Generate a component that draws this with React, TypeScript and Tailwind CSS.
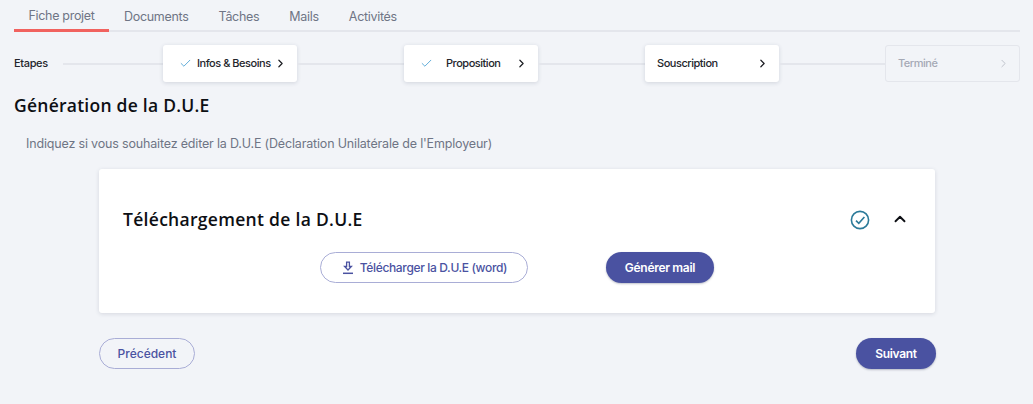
import { ChevronRight, ChevronUp, Check } from "lucide-react";

const body = "font-['Inter',sans-serif]";
const heading = "font-['Open_Sans',sans-serif]";

const tabs = ["Documents", "Tâches", "Mails", "Activités"];

const Line = ({ w }: { w: string }) => <div className={`h-[2px] ${w} shrink-0 bg-[#e4e6ec]`} />;

const Step = ({ label, done, disabled, gap }: { label: string; done?: boolean; disabled?: boolean; gap: string }) => (
  <div
    className={
      disabled
        ? "flex h-[37px] w-[135px] shrink-0 items-center justify-between rounded-[3px] border border-[#e4e6ec] pl-[12px] pr-[9px] text-[#a5a9b5]"
        : "flex h-[37px] w-[134px] shrink-0 items-center justify-between rounded-[3px] bg-white pl-[16px] pr-[10px] text-[#23252b] shadow-[0_1px_4px_rgba(40,50,80,0.16)]"
    }
  >
    <div className="flex items-center">
      {done && <Check size={13} strokeWidth={1.5} className="text-[#3f9bd0]" />}
      <span className={`${gap} text-[11px] font-medium tracking-[-0.47px]`}>{label}</span>
    </div>
    <ChevronRight size={13} strokeWidth={disabled ? 1.5 : 2.25} className={disabled ? "text-[#b4b7c1]" : "text-[#1d1f24]"} />
  </div>
);

const DownloadIcon = () => (
  <svg width="14" height="14" viewBox="0 0 14 14" fill="none" stroke="#4a52a1" strokeWidth="1.3">
    <path d="M5.6 1.2h2.8v4.3h2L7 9 3.6 5.5h2z" />
    <path d="M2 12.3h10" strokeWidth="1.5" />
  </svg>
);

const CheckCircle = () => (
  <svg className="mt-[2px]" width="20" height="20" viewBox="0 0 20 20" fill="none" stroke="#2b7a99">
    <circle cx="10" cy="10" r="8.6" strokeWidth="1.6" />
    <path d="M6 10.6l2.8 2.7L14.4 7" strokeWidth="1.6" />
  </svg>
);

export default function App() {
  return (
    <div className={`${body} h-[404px] w-[1033px] overflow-hidden bg-[#f2f4f8] pl-[14px] pr-[13px]`}>
      <div className="flex h-[32px] border-b-2 border-[#e4e6ec] text-[12.5px] tracking-[-0.3px] text-[#6f7585]">
        <div className="flex h-[32px] w-[95px] justify-center border-b-[3px] border-[#f1625f] pt-[7px]">
          Fiche projet
        </div>
        {tabs.map((t) => (
          <div key={t} className="px-[15px] pt-[8px]">
            {t}
          </div>
        ))}
      </div>

      <div className="mt-[13px] flex items-center">
        <span className="mr-[14px] w-[35px] shrink-0 text-[11px] font-medium tracking-[-0.35px] text-[#23252b]">Etapes</span>
        <Line w="w-[100px]" />
        <Step label="Infos & Besoins" done gap="ml-[5px]" />
        <Line w="w-[107px]" />
        <Step label="Proposition" done gap="ml-[13px]" />
        <Line w="w-[107px]" />
        <Step label="Souscription" gap="ml-[-4px]" />
        <Line w="w-[106px]" />
        <Step label="Terminé" disabled gap="" />
      </div>

      <h1 className={`${heading} mt-[11px] text-[17.5px] leading-[24px] font-semibold tracking-[0.25px] text-[#0d0f14]`}>
        Génération de la D.U.E
      </h1>

      <p className="mt-[17px] ml-[12px] text-[12.5px] leading-[20px] tracking-[-0.17px] text-[#6f7585]">
        Indiquez si vous souhaitez éditer la D.U.E (Déclaration Unilatérale de l'Employeur)
      </p>

      <div className="mt-[15px] ml-[85px] h-[144px] w-[836px] rounded-[3px] bg-white px-[24px] pt-[38px] shadow-[0_1px_4px_rgba(40,50,80,0.14)]">
        <div className="flex h-[24px] items-center justify-between">
          <h2 className={`${heading} text-[17.5px] font-semibold tracking-[0.3px] text-[#0d0f14]`}>
            Téléchargement de la D.U.E
          </h2>
          <div className="mr-[2px] flex items-center gap-[21px]">
            <CheckCircle />
            <ChevronUp size={18} strokeWidth={2.5} className="text-[#0d0f14]" />
          </div>
        </div>
        <div className="mt-[21px] ml-[197px] flex items-center gap-[78px]">
          <button className="flex h-[31px] w-[208px] items-center justify-center gap-[5px] rounded-full border border-[#a9add6] bg-white text-[12px] font-medium tracking-[-0.35px] text-[#4a52a1]">
            <DownloadIcon />
            Télécharger la D.U.E (word)
          </button>
          <button className="h-[31px] w-[108px] rounded-full bg-[#4a52a1] text-[12px] font-semibold tracking-[-0.3px] text-white shadow-[0_1px_2px_rgba(40,50,80,0.3)]">
            Générer mail
          </button>
        </div>
      </div>

      <div className="mt-[25px] ml-[85px] flex w-[837px] justify-between">
        <button className="h-[31px] w-[96px] rounded-full border border-[#a9add6] text-[12px] font-medium text-[#4a52a1]">
          Précédent
        </button>
        <button className="h-[31px] w-[80px] rounded-full bg-[#4a52a1] text-[12px] font-semibold tracking-[-0.3px] text-white shadow-[0_1px_2px_rgba(40,50,80,0.3)]">
          Suivant
        </button>
      </div>
    </div>
  );
}
